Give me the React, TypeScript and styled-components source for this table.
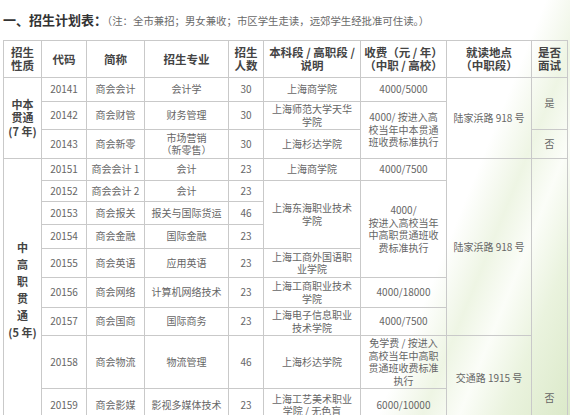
import React from 'react'
import styled, { createGlobalStyle } from 'styled-components'

const GlobalStyle = createGlobalStyle`
  html, body {
    margin: 0;
    padding: 0;
  }
  body {
    width: 570px;
    height: 415px;
    overflow: hidden;
    font-family: "Noto Sans CJK SC", "Noto Sans", sans-serif;
    background: linear-gradient(112deg, #ffffff 0%, #ffffff 74%, #eef5e4 80%, #fbfdf8 85%, #eaf3de 91%, #dbe9c9 100%);
  }
`

const Page = styled.div`
  padding: 0 3px;
`

const Heading = styled.div`
  height: 40px;
  line-height: 36px;
  white-space: nowrap;
`

const HeadingMain = styled.span`
  font-size: 13px;
  font-weight: 700;
  color: #333;
`

const HeadingNote = styled.span`
  font-size: 10.4px;
  color: #6a6a6a;
`

const Table = styled.table`
  width: 564px;
  table-layout: fixed;
  border-collapse: collapse;
  background: transparent;
`

const HeadCell = styled.th`
  border: 1px solid #c9c9c9;
  height: 36px;
  padding: 0;
  font-size: 11.5px;
  font-weight: 700;
  line-height: 13px;
  color: #444;
  text-align: center;
  vertical-align: middle;
`

const Row = styled.tr<{ $h: number }>`
  height: ${(p) => p.$h}px;
`

const Cell = styled.td<{ $bottom?: boolean }>`
  border: 1px solid #c9c9c9;
  padding: ${(p) => (p.$bottom ? '0 0 17px' : '1px 0')};
  font-size: 10px;
  line-height: 12.5px;
  color: #666;
  text-align: center;
  vertical-align: ${(p) => (p.$bottom ? 'bottom' : 'middle')};
  white-space: nowrap;
`

const LabelCell = styled.td<{ $lh: number }>`
  border: 1px solid #c9c9c9;
  padding: 0;
  font-size: 11px;
  font-weight: 700;
  line-height: ${(p) => p.$lh}px;
  color: #444;
  text-align: center;
  vertical-align: middle;
  white-space: nowrap;
`

const widths = [38, 45, 58, 84, 35, 97, 86, 85, 36]

const headers: string[][] = [
  ['招生', '性质'],
  ['代码'],
  ['简称'],
  ['招生专业'],
  ['招生', '人数'],
  ['本科段 / 高职段 /', '说明'],
  ['收费（元 / 年）', '（中职 / 高校）'],
  ['就读地点', '（中职段）'],
  ['是否', '面试'],
]

interface ICell {
  t: string[],
  rs?: number,
  label?: number,
  bottom?: boolean,
}

interface IRow {
  h: number,
  cells: ICell[],
}

const c = (text: string, rs?: number): ICell => ({ t: text.split('|'), rs })

const rows: IRow[] = [
  {
    h: 24,
    cells: [
      { t: ['中本', '贯通', '(7 年)'], rs: 3, label: 13.5 },
      c('20141'), c('商会会计'), c('会计学'), c('30'), c('上海商学院'), c('4000/5000'),
      c('陆家浜路 918 号', 3), c('是', 2),
    ],
  },
  {
    h: 28,
    cells: [
      c('20142'), c('商会财管'), c('财务管理'), c('30'), c('上海师范大学天华|学院'),
      c('4000/ 按进入高|校当年中本贯通|班收费标准执行', 2),
    ],
  },
  {
    h: 29,
    cells: [
      c('20143'), c('商会新零'), c('市场营销|（新零售）'), c('30'), c('上海杉达学院'), c('否'),
    ],
  },
  {
    h: 22,
    cells: [
      { t: ['中', '高', '职', '贯', '通', '(5 年)'], rs: 9, label: 17 },
      c('20151'), c('商会会计 1'), c('会计'), c('23'), c('上海商学院'), c('4000/7500'),
      c('陆家浜路 918 号', 7), { t: ['否'], rs: 9, bottom: true },
    ],
  },
  {
    h: 21,
    cells: [
      c('20152'), c('商会会计 2'), c('会计'), c('23'), c('上海东海职业技术|学院', 3),
      c('4000/|按进入高校当年|中高职贯通班收|费标准执行', 4),
    ],
  },
  { h: 23, cells: [c('20153'), c('商会报关'), c('报关与国际货运'), c('46')] },
  { h: 24, cells: [c('20154'), c('商会金融'), c('国际金融'), c('23')] },
  {
    h: 29,
    cells: [c('20155'), c('商会英语'), c('应用英语'), c('23'), c('上海工商外国语职|业学院')],
  },
  {
    h: 30,
    cells: [
      c('20156'), c('商会网络'), c('计算机网络技术'), c('23'), c('上海工商职业技术|学院'), c('4000/18000'),
    ],
  },
  {
    h: 28,
    cells: [
      c('20157'), c('商会国商'), c('国际商务'), c('23'), c('上海电子信息职业|技术学院'), c('4000/7500'),
    ],
  },
  {
    h: 53,
    cells: [
      c('20158'), c('商会物流'), c('物流管理'), c('46'), c('上海杉达学院'),
      c('免学费 / 按进入|高校当年中高职|贯通班收费标准|执行'), c('交通路 1915 号', 2),
    ],
  },
  {
    h: 33,
    cells: [
      c('20159'), c('商会影媒'), c('影视多媒体技术'), c('23'), c('上海工艺美术职业|学院 / 无色盲'), c('6000/10000'),
    ],
  },
]

const lines = (t: string[]) => t.map((line, i) => (
  <React.Fragment key={i}>
    {i > 0 && <br />}
    {line}
  </React.Fragment>
))

const renderCell = (cell: ICell, i: number) => (cell.label
  ? <LabelCell key={i} rowSpan={cell.rs} $lh={cell.label}>{lines(cell.t)}</LabelCell>
  : <Cell key={i} rowSpan={cell.rs} $bottom={cell.bottom}>{lines(cell.t)}</Cell>)

const App: React.FC = () => (
  <Page>
    <GlobalStyle />
    <Heading>
      <HeadingMain>一、招生计划表：</HeadingMain>
      <HeadingNote>（注：全市兼招；男女兼收；市区学生走读，远郊学生经批准可住读。）</HeadingNote>
    </Heading>
    <Table>
      <colgroup>
        {widths.map((w, i) => <col key={i} style={{ width: w }} />)}
      </colgroup>
      <thead>
        <tr>
          {headers.map((h, i) => <HeadCell key={i}>{lines(h)}</HeadCell>)}
        </tr>
      </thead>
      <tbody>
        {rows.map((row, i) => (
          <Row key={i} $h={row.h}>
            {row.cells.map(renderCell)}
          </Row>
        ))}
      </tbody>
    </Table>
  </Page>
)

export default App
